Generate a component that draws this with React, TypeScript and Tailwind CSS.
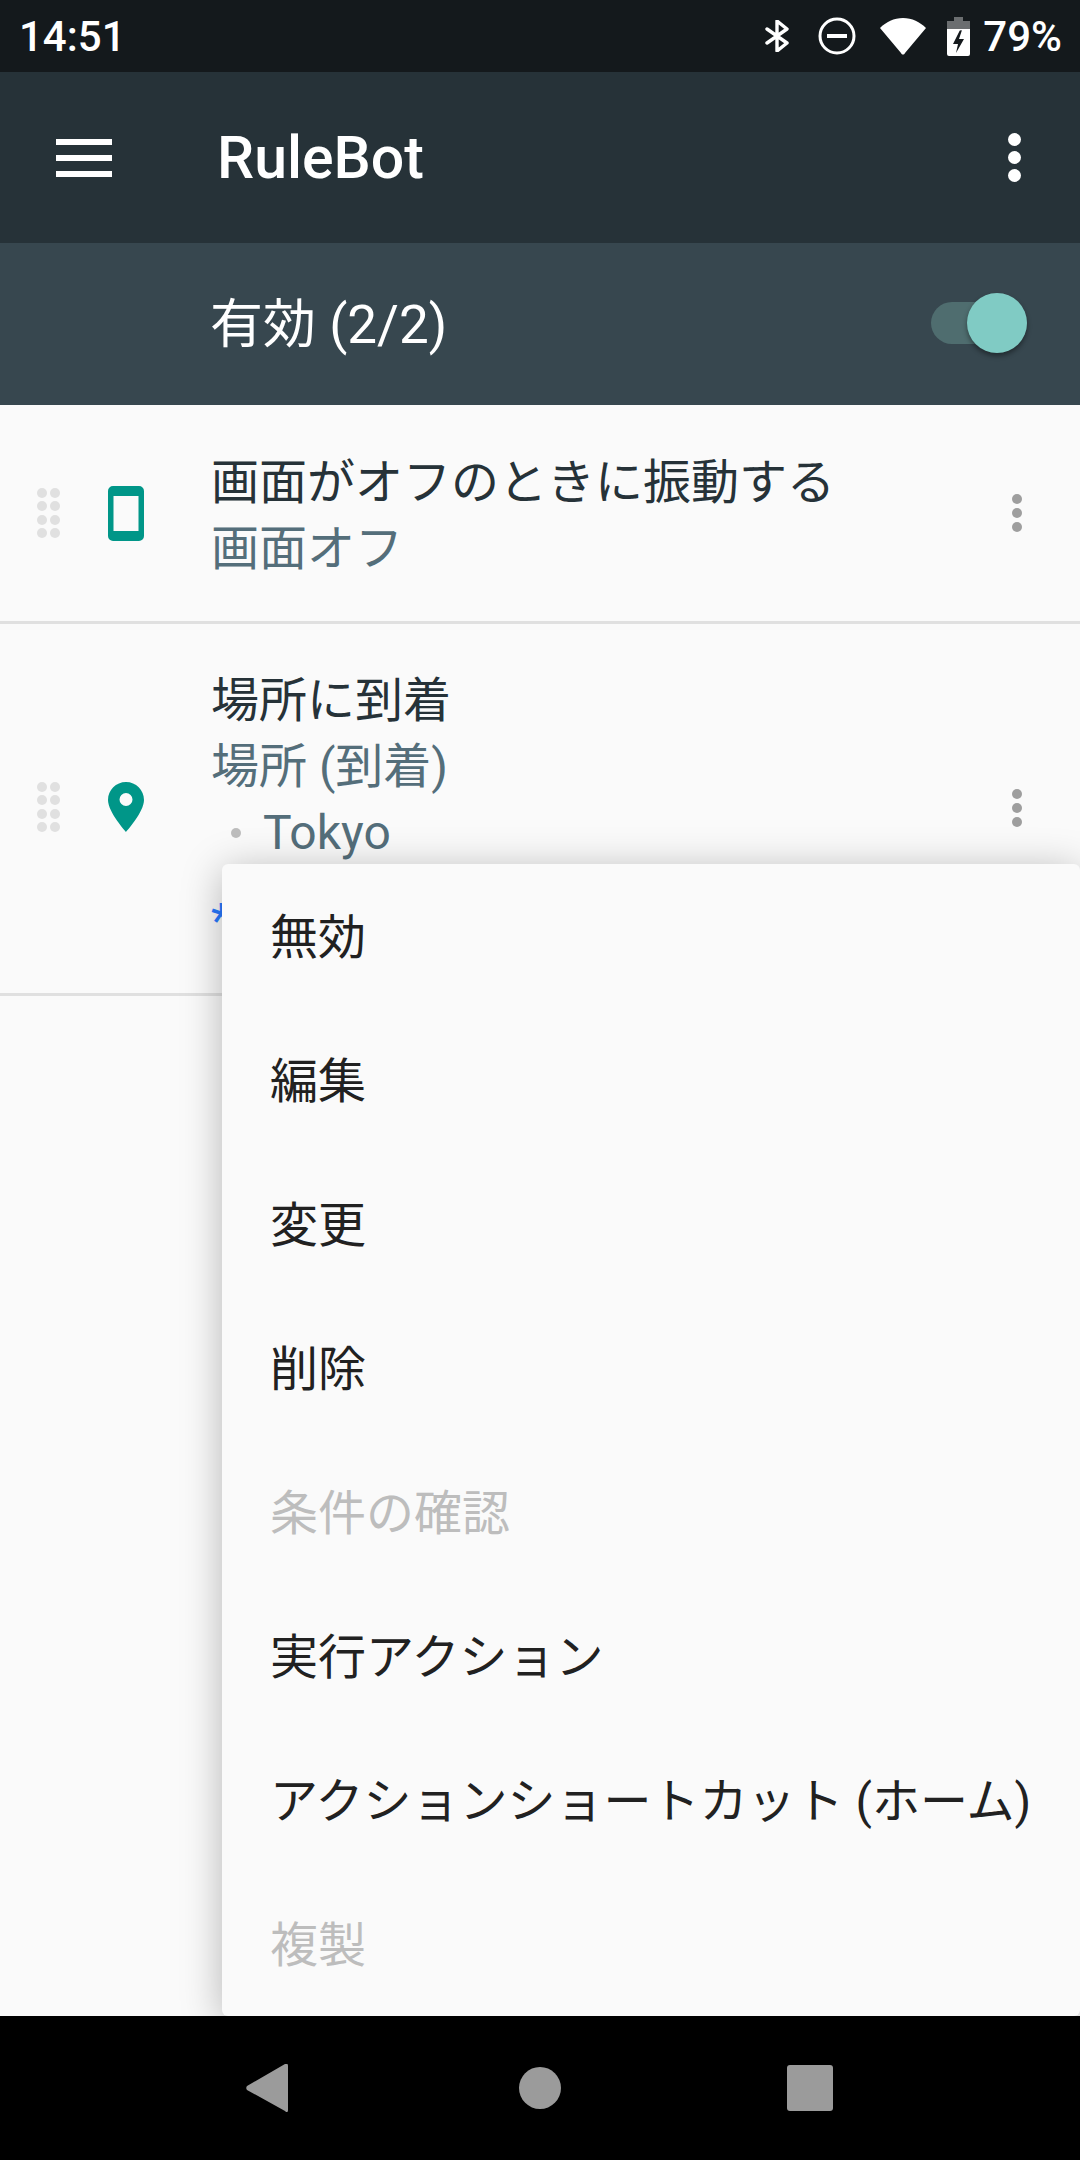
import { useState } from 'react'

const font = { fontFamily: 'Roboto, "Noto Sans CJK JP", sans-serif' }

function DragDots() {
  return (
    <div className="grid grid-cols-[10px_10px] gap-x-[3px] gap-y-[3.5px] w-[23px]">
      {Array.from({ length: 8 }).map((_, i) => (
        <span key={i} className="block w-[10px] h-[10px] rounded-full bg-[#e0e0e0]" />
      ))}
    </div>
  )
}

function RowMore() {
  return (
    <div className="flex flex-col gap-[4px]">
      <span className="w-[10px] h-[10px] rounded-full bg-[#9e9e9e]" />
      <span className="w-[10px] h-[10px] rounded-full bg-[#9e9e9e]" />
      <span className="w-[10px] h-[10px] rounded-full bg-[#9e9e9e]" />
    </div>
  )
}

function PhoneIcon() {
  return (
    <svg width="36" height="55" viewBox="0 0 36 55">
      <path fill="#009688" fillRule="evenodd" d="M5 0h26a5 5 0 0 1 5 5v45a5 5 0 0 1-5 5H5a5 5 0 0 1-5-5V5a5 5 0 0 1 5-5zM5.500 10v35h25V10z" />
    </svg>
  )
}

function PinIcon() {
  return (
    <svg width="36" height="50" viewBox="0 0 36 50">
      <path fill="#009688" fillRule="evenodd" d="M18 0C8 0 0 8 0 18c0 12 18 32 18 32s18-20 18-32C36 8 28 0 18 0zm0 11a6.500 6.500 0 1 1 0 13 6.500 6.500 0 0 1 0-13z" />
    </svg>
  )
}

const menuItems = [
  { label: '無効' },
  { label: '編集' },
  { label: '変更' },
  { label: '削除' },
  { label: '条件の確認', disabled: true },
  { label: '実行アクション' },
  { label: 'アクションショートカット (ホーム)' },
  { label: '複製', disabled: true },
]

export default function App() {
  const [enabled] = useState(true)

  return (
    <div className="flex flex-col w-[1080px] h-[2160px] overflow-hidden bg-[#fafafa]" style={font}>
      {/* Status bar */}
      <div className="flex items-center justify-between h-[72px] bg-[#14191c] pl-[19px] pr-[18px] text-white text-[42px] font-medium shrink-0">
        <span>14:51</span>
        <div className="flex items-center">
          <svg width="24" height="32" viewBox="0 0 24 32" fill="none" stroke="white" strokeWidth="3.400" strokeLinecap="round" strokeLinejoin="round">
            <path d="M2 9l20 14-10 8V1l10 8L2 23" />
          </svg>
          <svg className="ml-[29px]" width="38" height="38" viewBox="0 0 38 38" fill="none" stroke="white">
            <circle cx="19" cy="19" r="17" strokeWidth="3" />
            <path d="M9 19h20" strokeWidth="4" />
          </svg>
          <svg className="ml-[24px]" width="46" height="37" viewBox="0 0 46 37">
            <path fill="white" d="M0 10C6 4 14 0 23 0s17 4 23 10L25 35c-1 2-3 2-4 0z" />
          </svg>
          <svg className="ml-[21px]" width="23" height="39" viewBox="0 0 23 39">
            <path fill="#6b6e70" d="M7 0h9v4h7v10H0V4h7z" />
            <path fill="white" fillRule="evenodd" d="M0 12h23v25a2 2 0 0 1-2 2H2a2 2 0 0 1-2-2zM13 13l-7 14h5l-2 9 8-14h-5l3-9z" />
          </svg>
          <span className="ml-[13px]">79%</span>
        </div>
      </div>

      {/* Toolbar */}
      <div className="flex items-center justify-between h-[171px] bg-[#263238] pl-[56px] pr-[59px] shrink-0">
        <div className="flex items-center">
          <div className="flex flex-col gap-[10px]">
            <span className="block w-[56px] h-[6px] bg-white" />
            <span className="block w-[56px] h-[6px] bg-white" />
            <span className="block w-[56px] h-[6px] bg-white" />
          </div>
          <span className="ml-[105px] pt-[2px] text-white text-[59px] font-medium">RuleBot</span>
        </div>
        <div className="flex flex-col gap-[5px]">
          <span className="w-[13px] h-[13px] rounded-full bg-white" />
          <span className="w-[13px] h-[13px] rounded-full bg-white" />
          <span className="w-[13px] h-[13px] rounded-full bg-white" />
        </div>
      </div>

      {/* Enabled header */}
      <div className="flex items-center justify-between h-[162px] bg-[#37474f] pl-[210px] pr-[53px] shrink-0">
        <span className="pt-[4px] text-white text-[53px]">有効 (2/2)</span>
        <div className="relative w-[96px] h-[42px] mb-[2px] rounded-full bg-[#4f6d6f]">
          {enabled && (
            <span className="absolute right-0 top-[-9px] w-[60px] h-[60px] rounded-full bg-[#80cbc4] shadow-[0_3px_5px_rgba(0,0,0,0.4)]" />
          )}
        </div>
      </div>

      {/* Rules */}
      <div className="relative flex-1">
        <div className="flex items-center h-[219px] border-b-[3px] border-[#e0e0e0]">
          <div className="ml-[37px] w-[71px]"><DragDots /></div>
          <PhoneIcon />
          <div className="ml-[67px] flex-1 pt-[6px] text-[48px] leading-[66px]">
            <div className="text-[#263238]">画面がオフのときに振動する</div>
            <div className="text-[#546e7a]">画面オフ</div>
          </div>
          <div className="mr-[58px]"><RowMore /></div>
        </div>

        <div className="flex items-center h-[372px] border-b-[3px] border-[#e0e0e0]">
          <div className="ml-[37px] w-[71px] mb-[3px]"><DragDots /></div>
          <div className="mb-[3px]"><PinIcon /></div>
          <div className="ml-[67px] flex-1 text-[48px] leading-[66px]">
            <div className="text-[#263238]">場所に到着</div>
            <div className="text-[#546e7a]">場所 (到着)</div>
            <div className="flex items-center text-[#546e7a]">
              <span className="ml-[20px] w-[10px] h-[10px] rounded-full bg-[#bdbdbd]" />
              <span className="ml-[22px]">Tokyo</span>
            </div>
            <div className="h-[84px] pt-[22px] text-[#2979ff]">*</div>
          </div>
          <div className="mr-[58px] mb-[2px]"><RowMore /></div>
        </div>

        {/* Overflow menu */}
        <div className="absolute left-[222px] right-0 top-[459px] bottom-0 rounded-[6px] bg-[#fafafa] shadow-[0_6px_40px_rgba(0,0,0,0.28)]">
          {menuItems.map((item) => (
            <div
              key={item.label}
              className={`flex items-center h-[144px] pl-[48px] pt-[4px] text-[48px] whitespace-nowrap ${item.disabled ? 'text-[#bdbdbd]' : 'text-[#212121]'}`}
            >
              {item.label}
            </div>
          ))}
        </div>
      </div>

      {/* Nav bar */}
      <div className="relative flex items-center h-[144px] bg-black shrink-0">
        <svg className="ml-[246px]" width="42" height="48" viewBox="0 0 42 48">
          <path fill="#9b9b9b" d="M39 0c2-1 3 0 3 2v44c0 2-1 3-3 1L1 26c-1-1-1-3 0-4z" />
        </svg>
        <span className="ml-[231px] w-[42px] h-[42px] rounded-full bg-[#9b9b9b]" />
        <span className="ml-[226px] w-[46px] h-[46px] rounded-[3px] bg-[#9b9b9b]" />
      </div>
    </div>
  )
}
